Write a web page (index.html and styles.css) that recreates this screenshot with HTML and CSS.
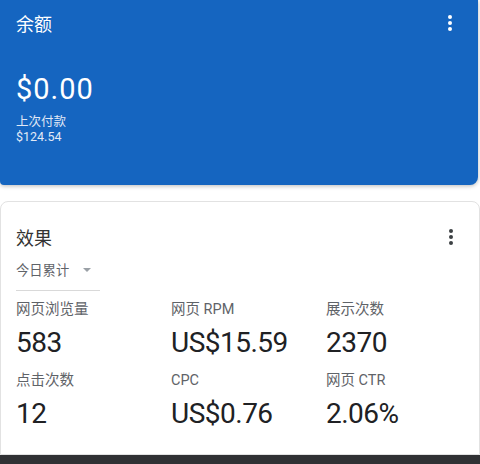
FILE: index.html
```html
<!DOCTYPE html>
<html lang="zh-CN">
<head>
<meta charset="utf-8">
<link rel="stylesheet" href="styles.css">
</head>
<body>
<div class="page">
  <section class="balance">
    <div class="card-head">
      <h2 class="title">余额</h2>
      <svg class="kebab" viewBox="0 0 24 24" width="24" height="24"><circle cx="12" cy="6" r="2"/><circle cx="12" cy="12" r="2"/><circle cx="12" cy="18" r="2"/></svg>
    </div>
    <div class="amount">$0.00</div>
    <div class="last-label">上次付款</div>
    <div class="last-value">$124.54</div>
  </section>
  <section class="perf">
    <div class="card-head">
      <h2 class="title dark">效果</h2>
      <svg class="kebab dark" viewBox="0 0 24 24" width="24" height="24"><circle cx="12" cy="6" r="2"/><circle cx="12" cy="12" r="2"/><circle cx="12" cy="18" r="2"/></svg>
    </div>
    <div class="range">
      <span>今日累计</span>
      <svg class="caret" viewBox="0 0 8 4" width="8" height="4"><path d="M0 0h8L4 4z"/></svg>
    </div>
    <div class="grid">
      <div class="metric"><div class="label">网页浏览量</div><div class="value">583</div></div>
      <div class="metric"><div class="label">网页 RPM</div><div class="value">US$15.59</div></div>
      <div class="metric"><div class="label">展示次数</div><div class="value">2370</div></div>
      <div class="metric"><div class="label">点击次数</div><div class="value">12</div></div>
      <div class="metric"><div class="label">CPC</div><div class="value">US$0.76</div></div>
      <div class="metric"><div class="label">网页 CTR</div><div class="value">2.06%</div></div>
    </div>
  </section>
  <div class="bottom-bar"></div>
</div>
</body>
</html>
```

FILE: styles.css
```css
* { box-sizing: border-box; }
html, body { margin: 0; padding: 0; }
body {
  width: 480px;
  height: 464px;
  overflow: hidden;
  background: #ffffff;
  font-family: Roboto, "Noto Sans CJK SC", sans-serif;
}
.page {
  display: flex;
  flex-direction: column;
  height: 464px;
}
.balance {
  background: #1565c0;
  color: #fff;
  width: 478px;
  height: 185px;
  border-radius: 0 0 8px 4px;
  padding: 10px 16px 0 16px;
  box-shadow: 0 1px 4px rgba(0,0,0,0.28);
  flex: none;
}
.card-head {
  display: flex;
  justify-content: space-between;
  align-items: center;
}
.title {
  margin: 0;
  font-weight: 400;
  font-size: 18px;
  line-height: 26px;
  font-family: "Noto Sans CJK SC", sans-serif;
}
.title.dark { color: #333; }
.kebab { fill: #fff; }
.kebab.dark { fill: #3c4043; }
.amount {
  margin-top: 35px;
  font-size: 29px;
  line-height: 36px;
  letter-spacing: 1px;
}
.last-label {
  margin-top: 6px;
  font-size: 12.5px;
  line-height: 16px;
  color: #e1e9f6;
  font-family: "Noto Sans CJK SC", sans-serif;
}
.last-value {
  font-size: 12.5px;
  line-height: 16px;
  color: #e1e9f6;
}
.perf {
  margin-top: 16px;
  flex: 1;
  border: 1px solid #e2e2e2;
  border-radius: 8px 8px 0 0;
  width: 480px;
  padding: 22px 16px 0 15px;
}
.range {
  margin-top: 11px;
  width: 84px;
  display: flex;
  align-items: center;
  gap: 14px;
  font-size: 13.3px;
  line-height: 18px;
  color: #5f6368;
  font-family: "Noto Sans CJK SC", sans-serif;
  padding-bottom: 11px;
  border-bottom: 1px solid #d9d9d9;
}
.caret { fill: #9aa0a6; }
.grid {
  display: grid;
  grid-template-columns: 155px 155px 155px;
  row-gap: 13px;
  margin-top: 10px;
}
.label {
  font-size: 14.5px;
  line-height: 18px;
  color: #5f6368;
}
.value {
  margin-top: 8px;
  font-size: 28px;
  line-height: 32px;
  letter-spacing: -0.5px;
  color: #202124;
}
.bottom-bar {
  height: 9px;
  background: #303134;
  flex: none;
}
```
